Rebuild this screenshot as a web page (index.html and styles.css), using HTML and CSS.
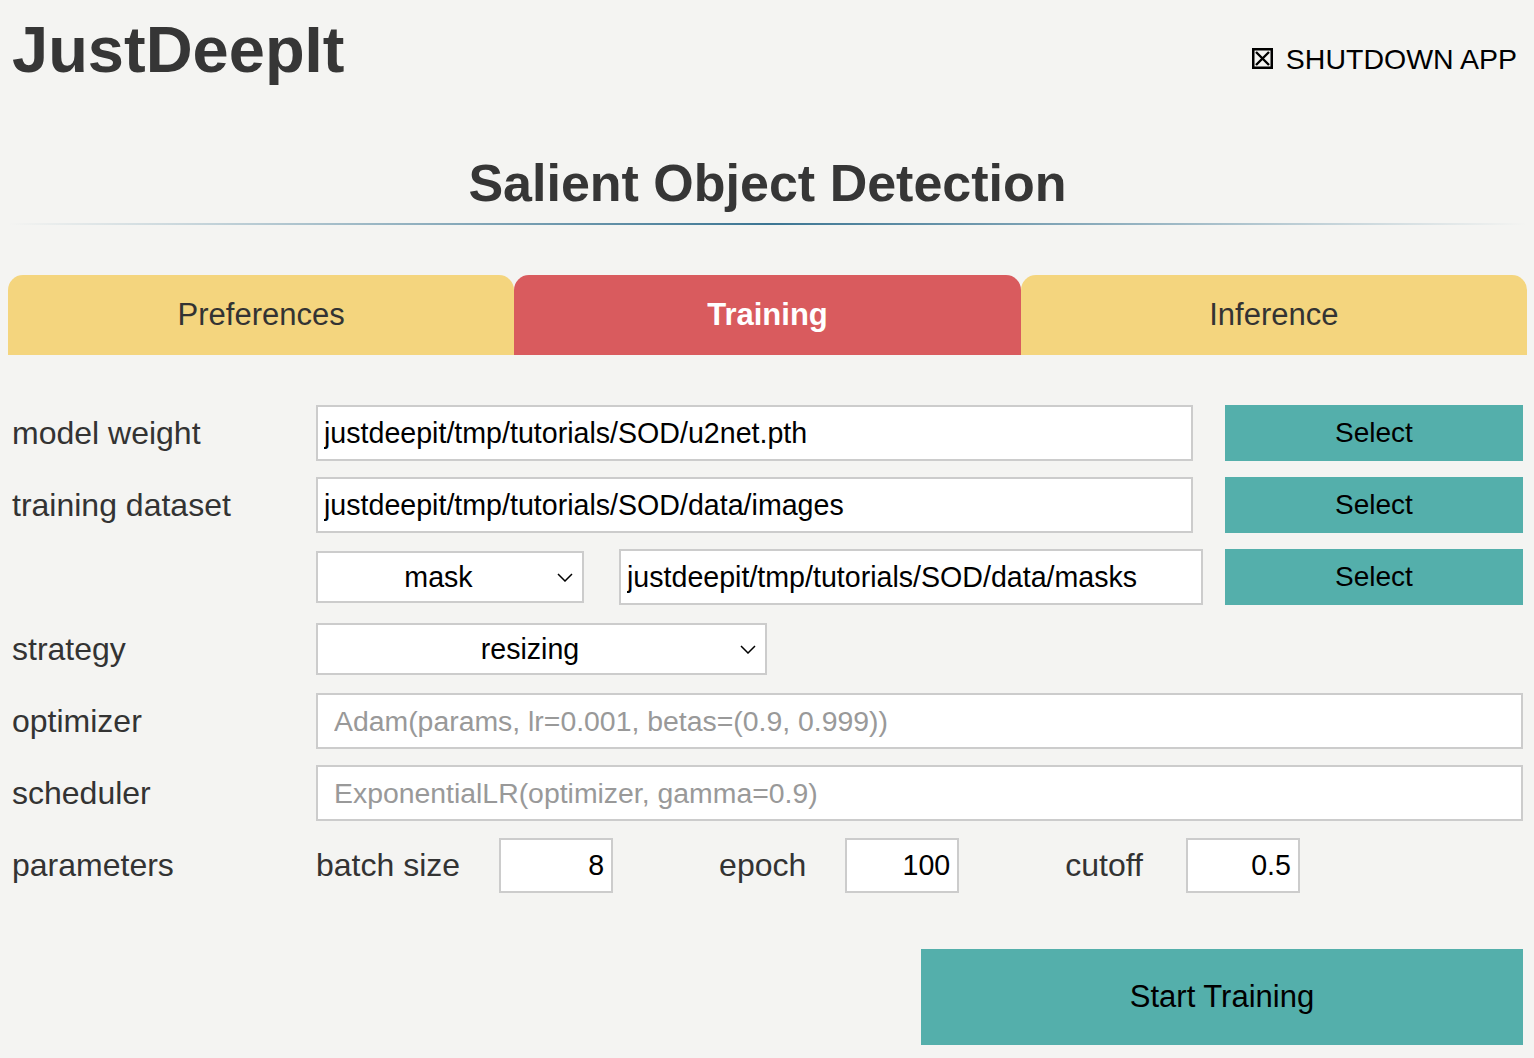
FILE: index.html
```html
<!DOCTYPE html>
<html lang="en">
<head>
    <meta charset="UTF-8">
    <meta name="viewport" content="width=device-width, initial-scale=1.0">
    <title>JustDeepIt</title>
    <link rel="stylesheet" href="styles.css">
</head>
<body>

<div class="header">
    <h1 class="app-title">JustDeepIt</h1>
    <a class="shutdown" href="#">
        <svg class="shutdown-icon" width="21" height="21" viewBox="0 0 21 21">
            <rect x="1.25" y="1.25" width="18.5" height="18.5" fill="none" stroke="#000" stroke-width="2.5"/>
            <path d="M4 4 L17 17 M17 4 L4 17" stroke="#000" stroke-width="2.4" fill="none"/>
        </svg>
        SHUTDOWN APP
    </a>
</div>

<div class="container">
    <h2 class="module-title">Salient Object Detection</h2>
    <div class="divider"></div>

    <div class="tabs">
        <div class="tab">Preferences</div>
        <div class="tab active">Training</div>
        <div class="tab">Inference</div>
    </div>

    <div class="form">
        <label class="field-label" for="model-weight">model weight</label>
        <input class="path-input" type="text" id="model-weight" value="justdeepit/tmp/tutorials/SOD/u2net.pth">
        <button class="select-btn">Select</button>

        <label class="field-label" for="train-images">training dataset</label>
        <input class="path-input" type="text" id="train-images" value="justdeepit/tmp/tutorials/SOD/data/images">
        <button class="select-btn">Select</button>

        <div></div>
        <div class="sub-row">
            <div class="select-box mask-select">
                <span class="select-value">mask</span>
                <svg class="chevron" width="16" height="9" viewBox="0 0 16 9"><path d="M1 1 L8 8 L15 1" fill="none" stroke="#000" stroke-width="1.5"/></svg>
            </div>
            <input class="path-input mask-input" type="text" value="justdeepit/tmp/tutorials/SOD/data/masks">
        </div>
        <button class="select-btn">Select</button>

        <label class="field-label">strategy</label>
        <div class="select-box strategy-select">
            <span class="select-value">resizing</span>
            <svg class="chevron" width="16" height="9" viewBox="0 0 16 9"><path d="M1 1 L8 8 L15 1" fill="none" stroke="#000" stroke-width="1.5"/></svg>
        </div>
        <div></div>

        <label class="field-label" for="optimizer">optimizer</label>
        <input class="wide-input" type="text" id="optimizer" placeholder="Adam(params, lr=0.001, betas=(0.9, 0.999))">

        <label class="field-label" for="scheduler">scheduler</label>
        <input class="wide-input" type="text" id="scheduler" placeholder="ExponentialLR(optimizer, gamma=0.9)">

        <label class="field-label">parameters</label>
        <div class="params">
            <span class="param-label">batch size</span>
            <input class="num-input" type="text" value="8">
            <span class="param-label">epoch</span>
            <input class="num-input" type="text" value="100">
            <span class="param-label cutoff">cutoff</span>
            <input class="num-input" type="text" value="0.5">
        </div>
    </div>

    <div class="actions">
        <button class="start-btn">Start Training</button>
    </div>
</div>

</body>
</html>
```

FILE: styles.css
```css
body {
    font-family: "Liberation Sans", Arial, sans-serif;
    margin: 0;
    background-color: #f4f4f2;
    color: #333;
}
.header {
    display: flex;
    justify-content: space-between;
    align-items: flex-start;
    padding: 17px 17px 0 12px;
}
.app-title {
    margin: 0;
    font-size: 65px;
    line-height: 1;
    font-weight: bold;
    color: #363636;
}
.shutdown {
    display: flex;
    align-items: center;
    gap: 13px;
    margin-top: 28px;
    font-size: 28.5px;
    line-height: 1;
    color: #000;
    text-decoration: none;
}
.shutdown-icon {
    margin-top: -1px;
}
.container {
    padding: 0 7px 0 8px;
}
.module-title {
    margin: 75px 0 0;
    font-size: 52px;
    line-height: 1;
    text-align: center;
    color: #363636;
}
.divider {
    height: 2px;
    margin-top: 14px;
    background: linear-gradient(to right, rgba(59, 117, 147, 0), #3b7593 50%, rgba(59, 117, 147, 0));
}
.tabs {
    display: flex;
    margin-top: 50px;
}
.tab {
    flex: 1;
    height: 80px;
    display: flex;
    align-items: center;
    justify-content: center;
    font-size: 31px;
    background-color: #f4d57e;
    border-radius: 15px 15px 0 0;
}
.tab.active {
    background-color: #d95b5e;
    color: #fff;
    font-weight: bold;
}
.form {
    display: grid;
    grid-template-columns: 304px 877px 330px;
    grid-auto-rows: 56px;
    row-gap: 16px;
    margin-top: 50px;
    padding: 0 4px;
}
.field-label {
    align-self: center;
    font-size: 32px;
}
input {
    font-family: inherit;
    box-sizing: border-box;
    border: 2px solid #ccc;
    background-color: #fff;
    color: #000;
    outline: none;
}
.path-input {
    height: 56px;
    font-size: 28.6px;
    padding: 0 6px;
}
.wide-input {
    grid-column: 2 / 4;
    height: 56px;
    font-size: 28.4px;
    padding: 0 16px;
}
.wide-input::placeholder {
    color: #999;
}
.sub-row {
    display: flex;
    align-items: center;
    gap: 35px;
}
.mask-input {
    width: 584px;
    flex-shrink: 0;
    height: 56px;
}
.select-box {
    box-sizing: border-box;
    height: 52px;
    display: flex;
    align-items: center;
    padding: 0 9px 0 2px;
    border: 2px solid #ccc;
    background-color: #fff;
    color: #000;
    font-size: 28.6px;
}
.select-value {
    flex: 1;
    text-align: center;
}
.mask-select {
    width: 268px;
    flex-shrink: 0;
}
.strategy-select {
    width: 451px;
    align-self: center;
}
.select-btn {
    justify-self: end;
    width: 298px;
    height: 56px;
    border: none;
    background-color: #54afab;
    color: #000;
    font-family: inherit;
    font-size: 28px;
    cursor: pointer;
}
.params {
    grid-column: 2 / 4;
    display: flex;
    align-items: center;
}
.param-label {
    font-size: 32px;
    margin-right: 39px;
}
.param-label.cutoff {
    margin-right: 43px;
}
.num-input {
    width: 114px;
    height: 55px;
    font-size: 28.6px;
    text-align: right;
    padding: 0 7px;
    margin-right: 106px;
}
.actions {
    display: flex;
    justify-content: flex-end;
    margin-top: 56px;
    padding-right: 4px;
}
.start-btn {
    width: 602px;
    height: 96px;
    border: none;
    background-color: #54afab;
    color: #000;
    font-family: inherit;
    font-size: 31px;
    cursor: pointer;
}
```
